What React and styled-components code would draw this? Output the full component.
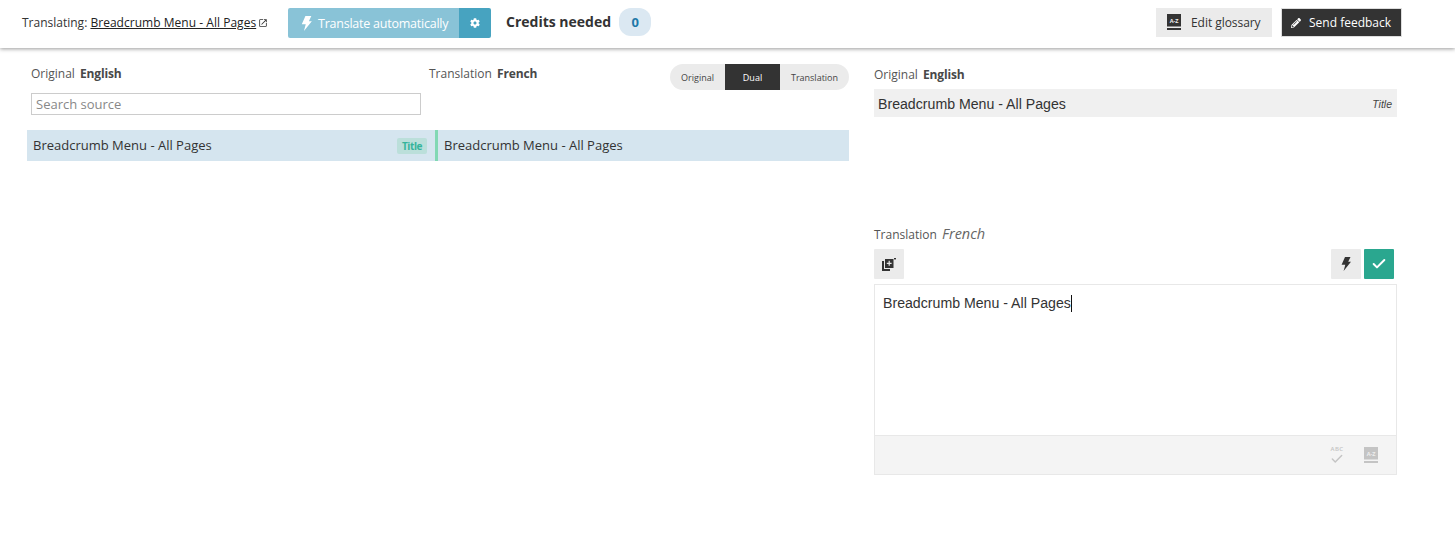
import React from "react";
import styled, { createGlobalStyle } from "styled-components";
import { FaCog, FaPencilAlt } from "react-icons/fa";
import { MdOpenInNew } from "react-icons/md";
import { Check } from "lucide-react";

const GlobalStyle = createGlobalStyle`
    html, body {
        margin: 0;
        padding: 0;
        background: #fff;
        color: #333;
        font-family: "Open Sans", "Liberation Sans", sans-serif;
    }
`;

const Page = styled.div`
    width: 1455px;
    height: 547px;
    overflow: hidden;
`;

const Header = styled.header`
    height: 48px;
    box-sizing: border-box;
    padding: 8px 53px 0 22px;
    display: flex;
    align-items: flex-start;
    box-shadow: 0 1px 4px rgba(0, 0, 0, 0.4);
`;

const Translating = styled.div`
    font-size: 12px;
    line-height: 30px;
    height: 30px;
    color: #333;
    display: flex;
    align-items: center;
    width: 266px;
    white-space: pre;
`;

const PageLink = styled.a`
    color: #222;
    text-decoration: underline;
    letter-spacing: 0.03px;
`;

const ExternalIcon = styled(MdOpenInNew)`
    font-size: 10px;
    margin-left: 2px;
`;

const AutoGroup = styled.div`
    display: flex;
    height: 30px;
    border-radius: 2px;
    overflow: hidden;
`;

const AutoButton = styled.div`
    width: 171px;
    background: #89c3d7;
    color: #fff;
    font-size: 12.5px;
    letter-spacing: -0.23px;
    display: flex;
    align-items: center;
    padding-left: 13px;
    box-sizing: border-box;
    gap: 6px;
`;

const AutoSettings = styled.div`
    width: 32px;
    background: #47a3c0;
    color: #fff;
    font-size: 10px;
    display: flex;
    align-items: center;
    justify-content: center;
`;

const Credits = styled.div`
    margin-left: 15px;
    font-size: 14px;
    font-weight: 700;
    line-height: 28px;
    color: #333;
`;

const CreditBadge = styled.div`
    margin-left: 8px;
    width: 32px;
    height: 28px;
    border-radius: 12px;
    background: #dbe8f2;
    color: #1f78a8;
    font-size: 13px;
    font-weight: 700;
    display: flex;
    align-items: center;
    justify-content: center;
`;

const HeaderActions = styled.div`
    margin-left: auto;
    display: flex;
    gap: 9px;
`;

const GlossaryButton = styled.div`
    width: 116px;
    height: 29px;
    box-sizing: border-box;
    padding-left: 11px;
    background: #ebebeb;
    color: #333;
    font-size: 12px;
    letter-spacing: -0.05px;
    display: flex;
    align-items: center;
    gap: 10px;
`;

const FeedbackButton = styled.div`
    width: 121px;
    height: 29px;
    box-sizing: border-box;
    padding-left: 9px;
    background: #333;
    border: 1px solid #ddd;
    color: #fff;
    font-size: 12px;
    font-weight: 500;
    display: flex;
    align-items: center;
    gap: 8px;
    svg {
        font-size: 10px;
    }
`;

const Main = styled.main`
    display: flex;
    padding-left: 27px;
    gap: 25px;
`;

const ListPanel = styled.section`
    width: 822px;
`;

const ListHead = styled.div`
    height: 66px;
    padding-top: 16px;
    display: grid;
    grid-template-columns: 402px 1fr auto;
`;

const SourceHead = styled.div`
    padding-left: 4px;
`;

const Label = styled.div`
    font-size: 12px;
    color: #555;
    line-height: 18px;
    margin-top: ${(p) => p.$top || 0}px;
    b {
        margin-left: 2px;
        font-weight: 700;
        color: #484848;
        letter-spacing: -0.15px;
    }
    i {
        margin-left: 2px;
        font-size: 14.5px;
        color: #666;
    }
`;

const SearchInput = styled.input`
    display: block;
    width: 390px;
    height: 22px;
    margin-top: 10px;
    box-sizing: border-box;
    padding: 0 4px;
    border: 1px solid #ccc;
    font-family: inherit;
    font-size: 13px;
    outline: none;
    &::placeholder {
        color: #888;
        opacity: 1;
    }
`;

const ModeToggle = styled.div`
    display: flex;
    height: 26px;
    width: 179px;
    border-radius: 13px;
    overflow: hidden;
    background: #ebebeb;
    font-size: 9px;
`;

const ModeOption = styled.div`
    flex: ${(p) => p.$width}px 0 0;
    display: flex;
    align-items: center;
    justify-content: center;
    background: ${(p) => (p.$active ? "#333" : "transparent")};
    color: ${(p) => (p.$active ? "#fff" : "#444")};
`;

const SegmentRow = styled.div`
    display: flex;
    height: 31px;
    background: #d5e5ef;
    font-size: 13px;
    color: #333;
`;

const SourceCell = styled.div`
    width: 408px;
    box-sizing: border-box;
    padding: 0 8px 2px 6px;
    display: flex;
    align-items: center;
    justify-content: space-between;
`;

const TitleTag = styled.span`
    width: 30px;
    box-sizing: border-box;
    font-size: 10px;
    font-weight: 700;
    color: #35b49b;
    background: #bbdfda;
    border-radius: 2px;
    text-align: center;
    line-height: 16px;
    letter-spacing: -0.4px;
    margin-top: 2px;
`;

const TargetCell = styled.div`
    flex: 1;
    border-left: 3px solid #82d8b4;
    padding: 0 0 2px 6px;
    display: flex;
    align-items: center;
`;

const EditorPanel = styled.section`
    width: 523px;
    padding-top: 18px;
`;

const SourceBox = styled.div`
    height: 28px;
    box-sizing: border-box;
    margin-top: 5px;
    padding: 2px 5px 0 4px;
    background: #f0f0f0;
    display: flex;
    align-items: center;
    justify-content: space-between;
    font-family: "Liberation Sans", sans-serif;
    font-size: 14.15px;
    color: #333;
    em {
        font-size: 10.5px;
        color: #444;
    }
`;

const EditorToolbar = styled.div`
    height: 30px;
    margin-top: 5px;
    padding-right: 3px;
    display: flex;
    align-items: center;
    gap: 3px;
`;

const ToolButton = styled.div`
    width: 30px;
    height: 30px;
    background: ${(p) => (p.$confirm ? "#2aa78f" : "#ebebeb")};
    color: ${(p) => (p.$confirm ? "#fff" : "#333")};
    display: flex;
    align-items: center;
    justify-content: center;
    border-radius: 1px;
    margin-left: ${(p) => (p.$push ? "auto" : "0")};
`;

const Editor = styled.div`
    margin-top: 5px;
    height: 191px;
    box-sizing: border-box;
    border: 1px solid #e8e8e8;
    display: flex;
    flex-direction: column;
`;

const EditorText = styled.div`
    flex: 1;
    padding: 10px 8px;
    font-family: "Liberation Sans", sans-serif;
    font-size: 14.15px;
    line-height: 16px;
    color: #333;
`;

const Caret = styled.span`
    display: inline-block;
    width: 1px;
    height: 17px;
    background: #111;
    vertical-align: -4px;
`;

const EditorFooter = styled.div`
    height: 39px;
    box-sizing: border-box;
    background: #f4f4f4;
    border-top: 1px solid #e8e8e8;
    display: flex;
    justify-content: flex-end;
    align-items: center;
    padding: 1px 18px 0 0;
    gap: 20px;
    color: #c4c4c4;
`;

const SpellCheck = styled.div`
    width: 14px;
    display: flex;
    flex-direction: column;
    align-items: center;
    font-size: 6px;
    line-height: 6px;
    font-weight: 600;
    letter-spacing: 0.4px;
`;

// stacked pages with a plus, used for "copy source"
function CopyIcon() {
    return (
        <svg width="14" height="13" viewBox="0 0 14 13">
            <rect x="0" y="3" width="8" height="10" fill="#333" />
            <rect x="2.5" y="0.5" width="9.5" height="10" fill="#333" stroke="#ebebeb" />
            <path d="M7.2 2.8v5M4.8 5.3h4.8" stroke="#ebebeb" strokeWidth="1.2" />
            <rect x="12" y="0" width="2" height="1.4" fill="#333" />
        </svg>
    );
}

function BoltIcon({ width = 10, height = 14 }) {
    return (
        <svg width={width} height={height} viewBox="0 0 10 14" fill="currentColor">
            <path d="M4 0h5.5L7.2 4.8H10L2.6 14l1.7-6.3H0.6z" />
        </svg>
    );
}

// A-Z glossary book, the label stays real text inside the svg
function GlossaryIcon({ color, size = 14 }) {
    return (
        <svg width={size} height={size + 3} viewBox="0 0 14 17">
            <rect x="0" y="0" width="14" height="12.5" fill={color} />
            <rect x="0" y="14" width="14" height="2" fill={color} />
            <text x="7" y="8.5" textAnchor="middle" fontSize="5.5" fontWeight="700" fill="#eee" fontFamily="Open Sans">
                A-Z
            </text>
        </svg>
    );
}

function App() {
    return (
        <Page>
            <GlobalStyle />
            <Header>
                <Translating>
                    Translating: <PageLink>Breadcrumb Menu - All Pages</PageLink>
                    <ExternalIcon />
                </Translating>
                <AutoGroup>
                    <AutoButton>
                        <BoltIcon width={11} height={15} />
                        Translate automatically
                    </AutoButton>
                    <AutoSettings>
                        <FaCog />
                    </AutoSettings>
                </AutoGroup>
                <Credits>Credits needed</Credits>
                <CreditBadge>0</CreditBadge>
                <HeaderActions>
                    <GlossaryButton>
                        <GlossaryIcon color="#333" />
                        Edit glossary
                    </GlossaryButton>
                    <FeedbackButton>
                        <FaPencilAlt />
                        Send feedback
                    </FeedbackButton>
                </HeaderActions>
            </Header>
            <Main>
                <ListPanel>
                    <ListHead>
                        <SourceHead>
                            <Label $top={1}>
                                Original <b>English</b>
                            </Label>
                            <SearchInput placeholder="Search source" />
                        </SourceHead>
                        <Label $top={1}>
                            Translation <b>French</b>
                        </Label>
                        <ModeToggle>
                            <ModeOption $width={55}>Original</ModeOption>
                            <ModeOption $width={55} $active>
                                Dual
                            </ModeOption>
                            <ModeOption $width={69}>Translation</ModeOption>
                        </ModeToggle>
                    </ListHead>
                    <SegmentRow>
                        <SourceCell>
                            Breadcrumb Menu - All Pages
                            <TitleTag>Title</TitleTag>
                        </SourceCell>
                        <TargetCell>Breadcrumb Menu - All Pages</TargetCell>
                    </SegmentRow>
                </ListPanel>
                <EditorPanel>
                    <Label>
                        Original <b>English</b>
                    </Label>
                    <SourceBox>
                        Breadcrumb Menu - All Pages
                        <em>Title</em>
                    </SourceBox>
                    <Label $top={108}>
                        Translation <i>French</i>
                    </Label>
                    <EditorToolbar>
                        <ToolButton>
                            <CopyIcon />
                        </ToolButton>
                        <ToolButton $push>
                            <BoltIcon />
                        </ToolButton>
                        <ToolButton $confirm>
                            <Check size={16} strokeWidth={3} />
                        </ToolButton>
                    </EditorToolbar>
                    <Editor>
                        <EditorText>
                            Breadcrumb Menu - All Pages
                            <Caret />
                        </EditorText>
                        <EditorFooter>
                            <SpellCheck>
                                ABC
                                <Check size={14} strokeWidth={2.5} />
                            </SpellCheck>
                            <GlossaryIcon color="#c4c4c4" />
                        </EditorFooter>
                    </Editor>
                </EditorPanel>
            </Main>
        </Page>
    );
}

export default App;
